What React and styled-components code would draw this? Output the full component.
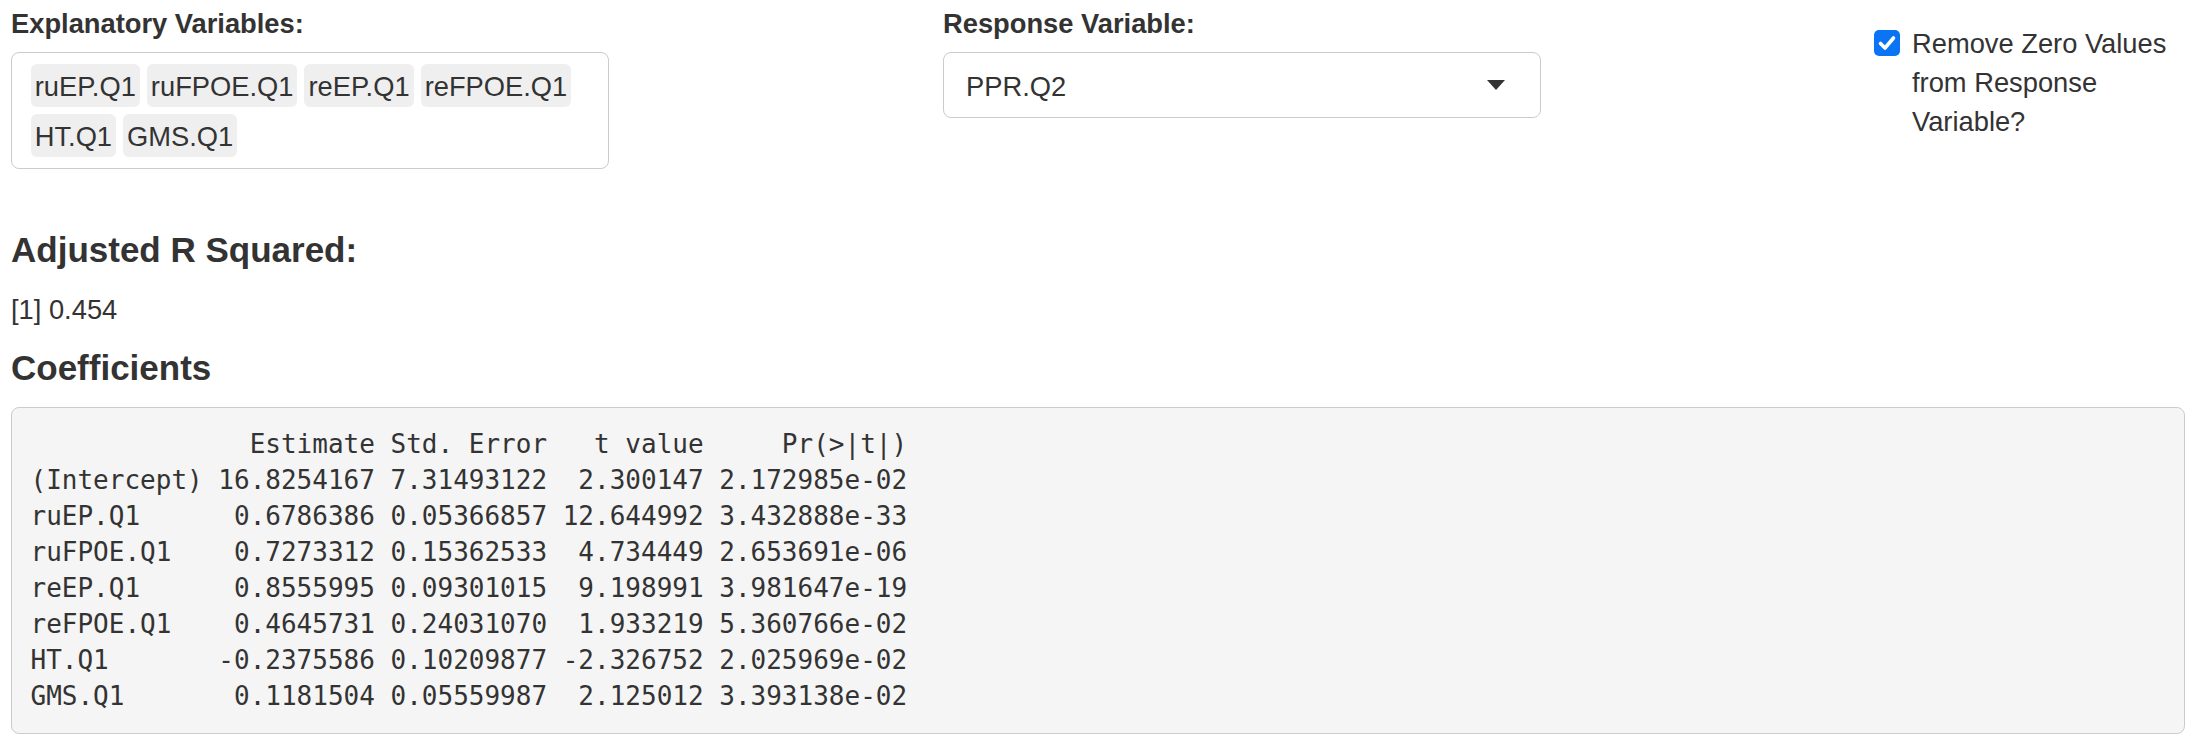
import React from 'react'
import styled, { createGlobalStyle } from 'styled-components'

const GlobalStyle = createGlobalStyle`
  * { box-sizing: border-box; }
  body {
    margin: 0;
    background: #fff;
    color: #333;
    font-family: "Liberation Sans", Arial, Helvetica, sans-serif;
    font-size: 27.3px;
    line-height: 39px;
  }
`;

const explanatory = ['ruEP.Q1', 'ruFPOE.Q1', 'reEP.Q1', 'reFPOE.Q1', 'HT.Q1', 'GMS.Q1'];

const header = ['', 'Estimate', 'Std. Error', 't value', 'Pr(>|t|)'];
const coefs = [
  ['(Intercept)', '16.8254167', '7.31493122', '2.300147', '2.172985e-02'],
  ['ruEP.Q1', '0.6786386', '0.05366857', '12.644992', '3.432888e-33'],
  ['ruFPOE.Q1', '0.7273312', '0.15362533', '4.734449', '2.653691e-06'],
  ['reEP.Q1', '0.8555995', '0.09301015', '9.198991', '3.981647e-19'],
  ['reFPOE.Q1', '0.4645731', '0.24031070', '1.933219', '5.360766e-02'],
  ['HT.Q1', '-0.2375586', '0.10209877', '-2.326752', '2.025969e-02'],
  ['GMS.Q1', '0.1181504', '0.05559987', '2.125012', '3.393138e-02'],
];

// mimic R's print() of a coefficient matrix
const formatRow = (r) =>
  r[0].padEnd(11) + ' ' +
  r[1].padStart(10) + ' ' +
  r[2].padStart(10) + ' ' +
  r[3].padStart(9) + ' ' +
  r[4].padStart(12);

const coefText = [header, ...coefs].map(formatRow).join('\n');

export default function App() {
  return (
    <>
      <GlobalStyle />
      <Page>
        <InputRow>
          <Field>
            <FieldLabel>Explanatory Variables:</FieldLabel>
            <TagBox>
              {explanatory.map((v) => (
                <Tag key={v}>{v}</Tag>
              ))}
            </TagBox>
          </Field>

          <Field>
            <FieldLabel>Response Variable:</FieldLabel>
            <SelectBox>
              <span>PPR.Q2</span>
              <Caret />
            </SelectBox>
          </Field>

          <CheckField>
            <CheckBox>
              <svg width="26" height="26" viewBox="0 0 26 26">
                <path
                  d="M6.5 13.5 L11 18 L19.5 8"
                  fill="none"
                  stroke="#fff"
                  strokeWidth="3.6"
                  strokeLinecap="round"
                  strokeLinejoin="round"
                />
              </svg>
            </CheckBox>
            <CheckLabel>Remove Zero Values from Response Variable?</CheckLabel>
          </CheckField>
        </InputRow>

        <Heading $first>Adjusted R Squared:</Heading>
        <PrintOut>[1] 0.454</PrintOut>

        <Heading>Coefficients</Heading>
        <CodeBlock>{coefText}</CodeBlock>
      </Page>
    </>
  )
}

const Page = styled.div`
  display: flex;
  flex-direction: column;
  padding: 4px 11px 0;
`;

const InputRow = styled.div`
  display: grid;
  grid-template-columns: 932px 931px 1fr;
  align-items: start;
`;

const Field = styled.div`
  display: flex;
  flex-direction: column;
  width: 598px;
`;

const FieldLabel = styled.label`
  font-weight: 700;
  line-height: 39px;
  margin-bottom: 9px;
`;

const TagBox = styled.div`
  display: flex;
  flex-wrap: wrap;
  gap: 7px;
  padding: 11px 18px 10.5px 18.7px;
  border: 1px solid #ccc;
  border-radius: 8px;
  background: #fff;
`;

const Tag = styled.span`
  display: flex;
  align-items: center;
  height: 43px;
  padding: 1px 4px 0;
  border-radius: 6px;
  background: #efefef;
  color: #333;
`;

const SelectBox = styled.div`
  display: flex;
  align-items: center;
  justify-content: space-between;
  height: 66px;
  padding: 2px 35px 0 22px;
  border: 1px solid #ccc;
  border-radius: 8px;
  background: #fff;
`;

const Caret = styled.span`
  width: 0;
  height: 0;
  margin-top: -3px;
  border-left: 9.5px solid transparent;
  border-right: 9.5px solid transparent;
  border-top: 10px solid #333;
`;

const CheckField = styled.label`
  display: flex;
  align-items: flex-start;
  gap: 12px;
  padding-top: 20px;
  padding-right: 8px;
`;

const CheckBox = styled.span`
  flex: none;
  display: flex;
  width: 26px;
  height: 26px;
  margin-top: 6px;
  border-radius: 5px;
  background: #0a74f5;
`;

const CheckLabel = styled.span`
  line-height: 39px;
`;

const Heading = styled.h4`
  margin: ${(p) => (p.$first ? '62.7px' : '0')} 0 20px;
  font-size: 35px;
  font-weight: 700;
  line-height: 38.5px;
  color: #333;
`;

const PrintOut = styled.div`
  line-height: 39px;
  margin-bottom: 20px;
`;

const CodeBlock = styled.pre`
  margin: 0;
  padding: 18px 18.5px 18.5px;
  border: 1px solid #ccc;
  border-radius: 8px;
  background: #f5f5f5;
  color: #333;
  font-family: "DejaVu Sans Mono", "Liberation Mono", monospace;
  font-size: 26px;
  line-height: 36px;
  white-space: pre;
`;
